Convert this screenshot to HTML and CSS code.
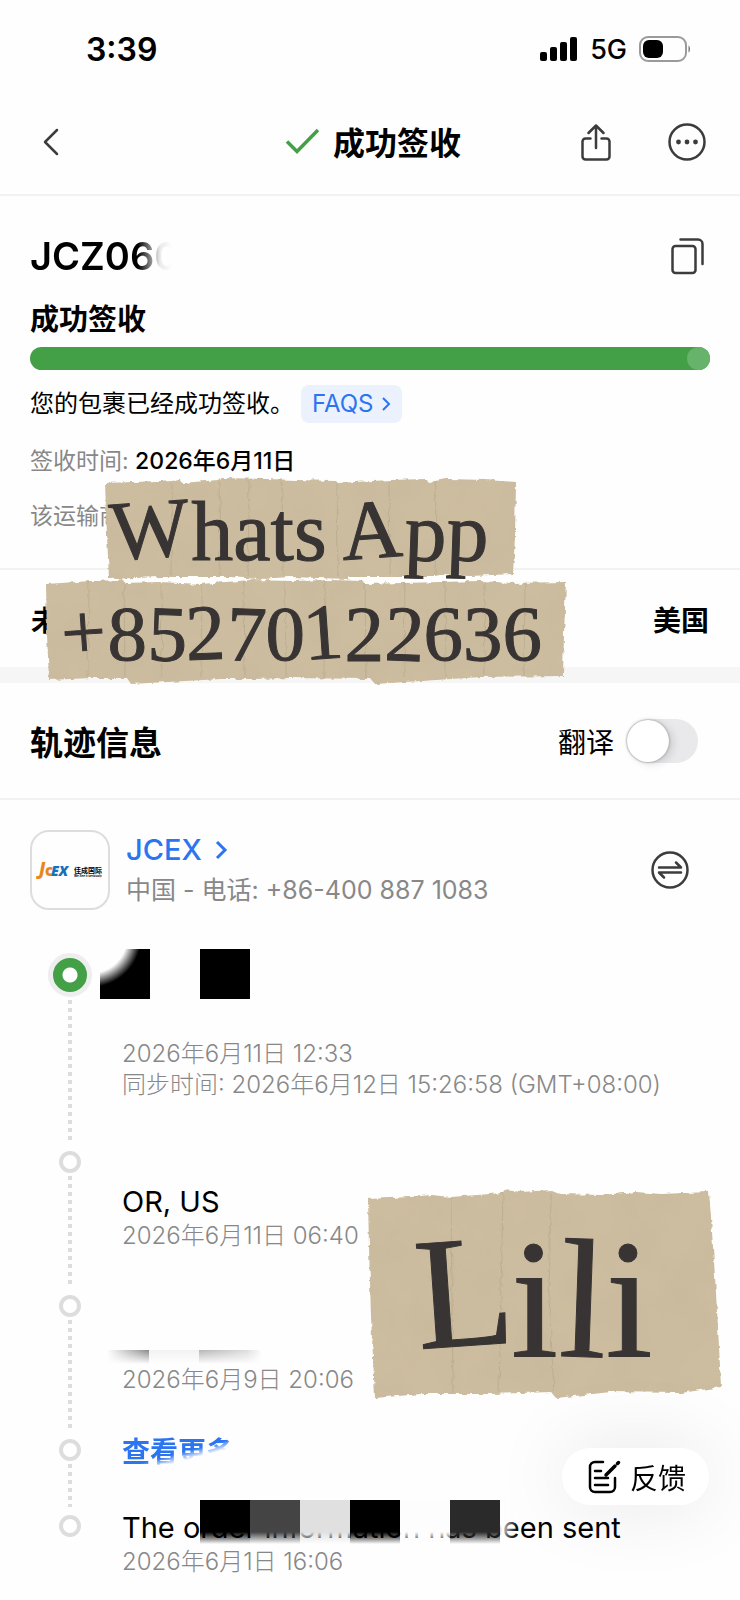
FILE: index.html
```html
<!DOCTYPE html>
<html lang="zh-CN">
<head>
    <meta charset="UTF-8">
    <meta name="viewport" content="width=device-width, initial-scale=1.0">
    <title>成功签收</title>
    <link rel="stylesheet" href="styles.css">
</head>
<body>
    <div class="status-bar">
        <span class="clock">3:39</span>
        <div class="status-icons">
            <svg width="38" height="24" viewBox="0 0 38 24">
                <rect x="0" y="15" width="7" height="9" rx="2"/>
                <rect x="10" y="10" width="7" height="14" rx="2"/>
                <rect x="20" y="5" width="7" height="19" rx="2"/>
                <rect x="30" y="0" width="7" height="24" rx="2"/>
            </svg>
            <span class="network">5G</span>
            <svg width="52" height="26" viewBox="0 0 52 26">
                <rect x="1" y="1" width="46" height="24" rx="8" fill="none" stroke="#9a9a9a" stroke-width="2"/>
                <rect x="4" y="4" width="20" height="18" rx="6"/>
                <path d="M49.500 9.500c2 1 2 6 0 7z" fill="#777"/>
            </svg>
        </div>
    </div>

    <header class="nav">
        <button class="icon-btn back" aria-label="返回">
            <svg width="24" height="40" viewBox="0 0 24 40"><path d="M18 8 6 20l12 12"/></svg>
        </button>
        <h1 class="nav-title">
            <svg width="36" height="28" viewBox="0 0 36 28"><path d="M2 14.500 12 24.500 33 3" fill="none" stroke="#43a047" stroke-width="3.500"/></svg>
            成功签收
        </h1>
        <div class="nav-actions">
            <button class="icon-btn" aria-label="分享">
                <svg width="40" height="40" viewBox="0 0 40 40"><path d="M14.500 16.500h-5a3 3 0 0 0-3 3v15a3 3 0 0 0 3 3h21a3 3 0 0 0 3-3v-15a3 3 0 0 0-3-3h-5M20 26V3.500M12.500 11 20 3.500l7.500 7.500"/></svg>
            </button>
            <button class="icon-btn" aria-label="更多">
                <svg width="40" height="40" viewBox="0 0 40 40"><circle cx="20" cy="20" r="17.500"/><g class="dots"><circle cx="11.500" cy="20" r="2.400"/><circle cx="20" cy="20" r="2.400"/><circle cx="28.500" cy="20" r="2.400"/></g></svg>
            </button>
        </div>
    </header>

    <main>
        <section class="summary">
            <div class="number-row">
                <h2 class="number">JCZ060</h2>
                <button class="icon-btn" aria-label="复制">
                    <svg width="40" height="40" viewBox="0 0 40 40"><rect x="2.500" y="10" width="23" height="27" rx="3"/><path d="M10.500 3.500H28a4.500 4.500 0 0 1 4.500 4.500v20"/></svg>
                </button>
            </div>
            <h3 class="state">成功签收</h3>
            <div class="progress"><span class="progress-end"></span></div>
            <div class="message">
                <span>您的包裹已经成功签收。</span>
                <a class="faqs" href="#">FAQS
                    <svg width="10" height="16" viewBox="0 0 10 16"><path d="M2 2l6 6-6 6"/></svg>
                </a>
            </div>
            <p class="meta">签收时间: <strong>2026年6月11日</strong></p>
            <p class="meta">该运输商</p>
        </section>

        <section class="route">
            <span>未</span>
            <span>美国</span>
        </section>

        <section class="track-head">
            <h2>轨迹信息</h2>
            <label class="translate">翻译
                <input type="checkbox" class="switch">
            </label>
        </section>

        <section class="carrier">
            <svg class="logo" viewBox="0 0 76 76">
                <g font-family="Open Sans, sans-serif" font-weight="800">
                    <text x="7" y="43" font-size="17" fill="#e8861c" font-style="italic">J</text>
                    <text x="13" y="44" font-size="15" fill="#e8861c">c</text>
                    <text x="19" y="44" font-size="14" fill="#1572b8" font-style="italic">EX</text>
                </g>
                <text x="42" y="41" font-size="7" font-weight="700" font-family="Noto Sans CJK SC, sans-serif">佳成国际</text>
                <text x="42" y="45" font-size="3" font-weight="700" font-family="Inter, sans-serif">We See it seriously</text>
            </svg>
            <div class="carrier-info">
                <a class="carrier-name" href="#">JCEX
                    <svg width="14" height="22" viewBox="0 0 14 22"><path d="M2 3l8 8-8 8"/></svg>
                </a>
                <p class="carrier-phone">中国 - 电话: +86-400 887 1083</p>
            </div>
            <button class="icon-btn" aria-label="切换">
                <svg width="40" height="40" viewBox="0 0 40 40"><circle cx="20" cy="20" r="17.500"/><path d="M9 17.500h22l-5-5M31 22.500H9l5 5"/></svg>
            </button>
        </section>

        <ol class="timeline">
            <li class="event current">
                <div class="rail"><span class="marker"></span><span class="line"></span></div>
                <div class="event-body">
                    <div class="blocks"><span class="block torn"></span><span class="block"></span></div>
                    <p class="time">2026年6月11日 12:33</p>
                    <p class="time">同步时间: 2026年6月12日 15:26:58 (GMT+08:00)</p>
                </div>
            </li>
            <li class="event">
                <div class="rail"><span class="marker"></span><span class="line"></span></div>
                <div class="event-body spaced">
                    <p class="place">OR, US</p>
                    <p class="time">2026年6月11日 06:40</p>
                </div>
            </li>
            <li class="event">
                <div class="rail"><span class="marker"></span><span class="line"></span></div>
                <div class="event-body spaced">
                    <div class="place smudged"><span class="smudge"></span></div>
                    <p class="time">2026年6月9日 20:06</p>
                </div>
            </li>
            <li class="event">
                <div class="rail"><span class="marker"></span><span class="line"></span></div>
                <div class="event-body raised">
                    <a class="more" href="#">查看更多</a>
                </div>
            </li>
            <li class="event last">
                <div class="rail"><span class="marker"></span></div>
                <div class="event-body raised">
                    <p class="place">The order information has been sent<span class="cover"></span></p>
                    <p class="time">2026年6月1日 16:06</p>
                </div>
            </li>
        </ol>
    </main>

    <!-- paper notes -->
    <svg class="note note-app" width="420" height="112" viewBox="0 0 420 112">
        <defs>
            <filter id="torn" x="-5%" y="-5%" width="110%" height="110%">
                <feTurbulence type="fractalNoise" baseFrequency="0.12" numOctaves="3" seed="4" result="edge"/>
                <feDisplacementMap in="SourceGraphic" in2="edge" scale="5" result="paper"/>
                <feTurbulence type="fractalNoise" baseFrequency="0.02" numOctaves="4" seed="9"/>
                <feColorMatrix values="0 0 0 0 .45  0 0 0 0 .36  0 0 0 0 .24  .25 0 0 0 -.08"/>
                <feComposite in2="paper" operator="in" result="grain"/>
                <feMerge><feMergeNode in="paper"/><feMergeNode in="grain"/></feMerge>
            </filter>
        </defs>
        <g filter="url(#torn)">
            <path class="paper" d="M5 8 60 6 80 4 82 8 118 5 120 3 166 4 196 5 236 6 238 8 290 5 326 4 328 7 348 4 385 5 416 7 415 60 413 99 370 101 340 100 330 102 250 102 248 104 190 102 160 104 130 102 60 102 9 104 7 60z"/>
            <path class="fold" d="M72 8 71 100M119 6 120 100M149 6 148 101M182 7 183 100M237 8 238 101M289 6 290 100M336 6 335 99"/>
        </g>
        <text class="note-text" x="12" y="85" font-size="84" rotate="-4 0 0 0 0 0 -4 2 2">Whats App</text>
    </svg>
    <svg class="note note-phone" width="530" height="112" viewBox="0 0 530 112">
        <g filter="url(#torn)">
            <path class="paper" d="M5 10 50 7 82 6 84 9 118 8 160 10 210 6 250 7 290 6 322 7 324 10 400 8 440 7 470 9 525 8 523 60 522 102 440 103 410 105 334 110 330 105 250 104 212 105 180 105 90 110 86 104 50 104 8 106 6 60z"/>
            <path class="fold" d="M48 8 47 103M83 9 84 103M120 9 121 104M161 10 160 103M203 7 204 103M244 7 245 103M284 7 283 103M324 10 325 104M364 9 363 103M404 8 405 103M443 8 444 102M484 9 483 102"/>
        </g>
        <text class="note-text" x="22" y="86" font-size="79" rotate="-4 0 2 -2 2 0 -4 0 2 0 0 0">+85270122636</text>
    </svg>
    <svg class="note note-name" width="370" height="220" viewBox="0 0 370 220">
        <g filter="url(#torn)">
            <path class="paper" d="M7 12 50 10 70 8 90 10 142 6 143 3 160 5 190 3 200 7 240 8 275 5 300 7 348 5 350 30 354 90 357 140 360 200 320 206 250 205 195 211 190 205 130 207 60 207 14 211 10 130 8 60z"/>
            <path class="fold" d="M90 11 92 206M142 6 140 100 138 205M190 7 188 110 193 205"/>
        </g>
        <text class="note-text" x="58" y="162" font-size="160" transform="rotate(-4 58 162)">L</text>
        <text class="note-text" x="150" y="169" font-size="170" rotate="0 2 0">ili</text>
    </svg>

    <button class="feedback">
        <svg width="34" height="36" viewBox="0 0 34 36"><path d="M16 3H8a5 5 0 0 0-5 5v20a5 5 0 0 0 5 5h15a5 5 0 0 0 5-5v-9M8 12h6M8 19h13M8 26h13"/><path d="M19 16 28 7M30.500 4.500l1-1" stroke-width="3.500"/></svg>
        反馈
    </button>
</body>
</html>
```

FILE: styles.css
```css
* {
    box-sizing: border-box;
    margin: 0;
    padding: 0;
}

body {
    position: relative;
    min-height: 100vh;
    overflow-x: hidden;
    background: #fefefe;
    color: #000;
    font-family: Inter, 'Noto Sans CJK SC', sans-serif;
    font-size: 28px;
}

a {
    color: #2b75f0;
    text-decoration: none;
}

button {
    border: none;
    background: none;
    font: inherit;
    color: inherit;
    cursor: pointer;
}

svg {
    flex-shrink: 0;
}

.status-bar {
    display: flex;
    align-items: center;
    justify-content: space-between;
    height: 90px;
    padding: 8px 49px 0 86px;
}

.clock {
    font-size: 32px;
    font-weight: 600;
}

.status-icons {
    display: flex;
    align-items: center;
    gap: 12px;
}

.network {
    font-size: 27px;
    font-weight: 500;
}

/* header */
.nav {
    display: grid;
    grid-template-columns: 1fr auto 1fr;
    align-items: center;
    height: 106px;
    padding: 0 33px 0 39px;
    border-bottom: 2px solid #f2f2f2;
}

.nav-title {
    display: flex;
    align-items: center;
    gap: 12px;
    padding-bottom: 3px;
    font-size: 32px;
    font-weight: 600;
}

.nav-actions {
    display: flex;
    justify-content: flex-end;
    gap: 51px;
}

.icon-btn {
    display: flex;
}

.icon-btn svg {
    fill: none;
    stroke: #3c3c3c;
    stroke-width: 2.5;
    stroke-linecap: round;
    stroke-linejoin: round;
}

.icon-btn .dots {
    fill: #3c3c3c;
    stroke: none;
}

/* summary */
.summary {
    padding: 32px 30px 35px;
    border-bottom: 2px solid #f2f2f2;
}

.number-row {
    display: flex;
    align-items: center;
    justify-content: space-between;
    height: 56px;
}

.number {
    font-size: 38px;
    font-weight: 600;
    -webkit-mask-image: linear-gradient(to right, #000 108px, rgba(0, 0, 0, 0.08) 130px, transparent 142px);
    mask-image: linear-gradient(to right, #000 108px, rgba(0, 0, 0, 0.08) 130px, transparent 142px);
}

.state {
    margin-top: 16px;
    font-size: 29px;
    font-weight: 600;
    line-height: 40px;
}

.progress {
    display: flex;
    justify-content: flex-end;
    height: 23px;
    margin-top: 7px;
    border-radius: 12px;
    background: #43a047;
}

.progress-end {
    width: 23px;
    border-radius: 50%;
    background: #68b36b;
}

.message {
    display: flex;
    align-items: center;
    gap: 7px;
    height: 38px;
    margin-top: 15px;
    font-size: 24px;
    line-height: 34px;
}

.faqs {
    display: flex;
    align-items: center;
    gap: 8px;
    height: 38px;
    padding: 0 11px;
    border-radius: 8px;
    background: #ebf2fe;
}

.faqs svg,
.carrier-name svg {
    fill: none;
    stroke: #2b75f0;
    stroke-width: 2;
}

.meta {
    margin-top: 21px;
    color: #888;
    font-size: 23px;
    line-height: 34px;
}

.meta strong {
    color: #000;
    font-weight: 500;
}

.route {
    display: flex;
    align-items: center;
    justify-content: space-between;
    height: 113px;
    padding: 0 31px;
    border-bottom: 16px solid #f6f6f6;
    font-weight: 600;
}

.track-head {
    display: flex;
    align-items: center;
    justify-content: space-between;
    height: 117px;
    padding: 0 42px 0 30px;
    border-bottom: 2px solid #f2f2f2;
}

.track-head h2 {
    font-size: 33px;
    font-weight: 600;
}

.translate {
    display: flex;
    align-items: center;
    gap: 12px;
}

.switch {
    appearance: none;
    width: 72px;
    height: 44px;
    border-radius: 22px;
    background: #e9e9eb;
    cursor: pointer;
}

.switch::before {
    content: '';
    display: block;
    width: 42px;
    height: 42px;
    margin: 1px;
    border-radius: 50%;
    background: #fff;
    box-shadow: 0 0 3px rgba(0, 0, 0, 0.35), 4px 2px 8px rgba(0, 0, 0, 0.12);
}

.switch:checked {
    background: #43a047;
}

.switch:checked::before {
    margin-left: 29px;
}

/* carrier */
.carrier {
    display: flex;
    align-items: center;
    padding: 30px 50px 0 30px;
}

.logo {
    width: 80px;
    height: 80px;
    border: 2px solid #ddd;
    border-radius: 19px;
}

.carrier-info {
    flex: 1;
    padding-left: 16px;
}

.carrier-name {
    display: flex;
    align-items: center;
    gap: 13px;
    font-size: 29px;
    font-weight: 500;
    line-height: 40px;
}

.carrier-name svg {
    stroke-width: 3;
}

.carrier-phone {
    color: #888;
    font-size: 25px;
    line-height: 40px;
}

/* timeline */
.timeline {
    margin-top: 43px;
    padding: 0 30px;
    list-style: none;
}

.event {
    display: flex;
}

.rail {
    display: flex;
    flex-direction: column;
    align-items: center;
    width: 80px;
    margin-right: 12px;
}

.marker {
    width: 22px;
    height: 22px;
    border: 4px solid #ddd;
    border-radius: 50%;
    background: #fff;
}

.current .marker {
    width: 44px;
    height: 44px;
    border: 5px solid #eee;
    background: radial-gradient(circle, #fff 7px, #43a047 8px);
}

.line {
    flex: 1;
    width: 4px;
    margin: 3px 0 8px;
    background: repeating-linear-gradient(#ddd 0 4px, transparent 4px 8px);
}

.event-body {
    flex: 1;
    padding-bottom: 51px;
}

.event-body.spaced {
    padding: 33px 0 44px;
}

.event-body.raised {
    margin-top: -5px;
    padding-bottom: 45px;
}

.last .event-body.raised {
    padding-bottom: 0;
}

.blocks {
    display: flex;
    gap: 50px;
    margin: -4px 0 39px -22px;
}

.block {
    width: 50px;
    height: 50px;
    background: #000;
}

.block.torn {
    background: radial-gradient(circle at -9px -12px, #fefefe 36px, #000 50px);
}

.place {
    position: relative;
    font-size: 29px;
    line-height: 36px;
}

.time {
    color: #888;
    font-size: 24px;
    font-weight: 300;
    line-height: 31px;
}

.smudged {
    height: 36px;
}

.smudge {
    position: absolute;
    top: 22px;
    left: -15px;
    width: 155px;
    height: 14px;
    background: linear-gradient(to right, transparent, #888 42px, #f2f2f2 42px 92px, #b5b5b5 92px, #ddd 140px, transparent);
    -webkit-mask-image: linear-gradient(#000, transparent);
    mask-image: linear-gradient(#000, transparent);
}

.more {
    display: inline-block;
    line-height: 36px;
    font-weight: 600;
    -webkit-mask-image: linear-gradient(165deg, #000 52%, transparent 66%);
    mask-image: linear-gradient(165deg, #000 52%, transparent 66%);
}

.cover {
    position: absolute;
    top: -10px;
    left: 78px;
    width: 318px;
    height: 44px;
    background: linear-gradient(to right, #000 50px, #444 50px 100px, #e0e0e0 100px 150px, #000 150px 200px, #fdfdfd 200px 250px, #2a2a2a 250px 300px, rgba(253, 253, 253, 0.9) 300px, transparent);
    -webkit-mask-image: linear-gradient(#000 32px, transparent);
    mask-image: linear-gradient(#000 32px, transparent);
}

/* paper notes */
.note {
    position: absolute;
}

.note-app {
    top: 475px;
    left: 100px;
}

.note-phone {
    top: 574px;
    left: 41px;
}

.note-name {
    top: 1187px;
    left: 361px;
}

.paper {
    fill: #cdbda0;
}

.fold {
    fill: none;
    stroke: #a8997d;
    stroke-opacity: 0.4;
}

.note-text {
    fill: #383434;
    stroke: #383434;
    font-family: 'Liberation Serif', serif;
}

.feedback {
    position: fixed;
    right: 31px;
    bottom: 95px;
    display: flex;
    align-items: center;
    gap: 9px;
    height: 57px;
    padding: 0 23px 0 25px;
    border-radius: 29px;
    background: #fff;
    box-shadow: 0 0 80px rgba(0, 0, 0, 0.1);
}

.feedback svg {
    fill: none;
    stroke: #000;
    stroke-width: 2.5;
    stroke-linecap: round;
}
```
